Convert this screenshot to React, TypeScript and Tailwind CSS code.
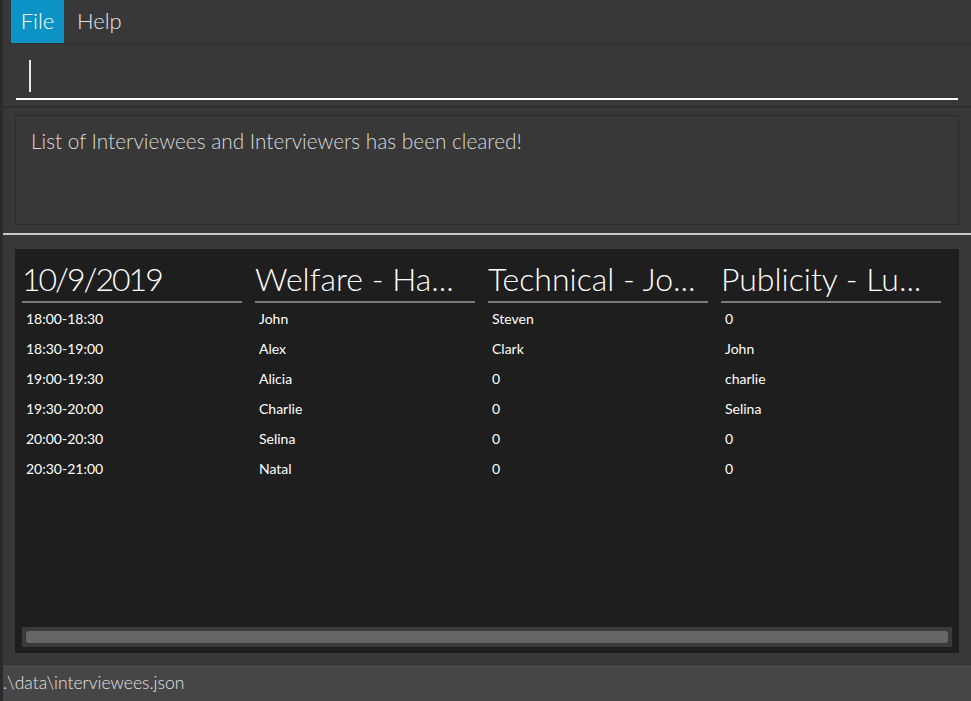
const rows = [
  ['18:00-18:30', 'John', 'Steven', '0'],
  ['18:30-19:00', 'Alex', 'Clark', 'John'],
  ['19:00-19:30', 'Alicia', '0', 'charlie'],
  ['19:30-20:00', 'Charlie', '0', 'Selina'],
  ['20:00-20:30', 'Selina', '0', '0'],
  ['20:30-21:00', 'Natal', '0', '0'],
];

const headers = ['10/9/2019', 'Welfare - Ha...', 'Technical - Jo...', 'Publicity - Lu...'];

export default function App() {
  return (
    <div
      className="w-[971px] h-[701px] bg-[#383838] flex flex-col overflow-hidden border-l-[3px] border-[#2b2b2b] text-white"
      style={{ fontFamily: 'Lato, "Open Sans", sans-serif' }}
    >
      {/* menu */}
      <div className="h-[44px] flex items-stretch border-b border-[#303030] pl-[8px]">
        <div className="bg-[#0b93c6] w-[53px] flex items-center justify-center text-[22px] font-light pb-[2px]">File</div>
        <div className="px-[13px] flex items-center text-[22px] font-light text-[#e4e4e4] pb-[2px]">Help</div>
      </div>

      {/* command box */}
      <div className="h-[64px] px-[13px] pt-[15px] border-b-2 border-[#2e2e2e]">
        <div className="h-[41px] border-b-2 border-white pl-[13px] pt-[1px]">
          <div className="w-[2px] h-[32px] bg-[#e8e8e8]"></div>
        </div>
      </div>

      {/* result box */}
      <div className="px-[12px] pt-[7px] pb-[8px]">
        <div className="h-[110px] border border-[#2c2c2c] px-[15px] pt-[9px] text-[20.8px] font-light text-[#d8d8d8]">
          List of Interviewees and Interviewers has been cleared!
        </div>
      </div>
      <div className="h-[2px] bg-[#cacaca]"></div>

      {/* schedule */}
      <div className="px-[12px] pt-[14px] pb-[11px] flex-1 flex flex-col">
        <div className="flex-1 bg-[#1e1e1e] flex flex-col px-[7px] pb-[6px]">
          <div className="flex-1 grid grid-cols-4 gap-x-[13px] pt-[10px] pr-[11px] content-start">
            {headers.map((h, k) => (
              <div
                key={h}
                className={
                  'border-b-2 border-[#7a7a7a] h-[44px] text-[32px] font-light leading-[40px] whitespace-nowrap overflow-hidden' +
                  (k === 0 ? ' tracking-[-2px]' : '')
                }
              >
                {h}
              </div>
            ))}
            {rows.map((r, i) =>
              r.map((c, j) => (
                <div key={i + '-' + j} className="h-[30px] flex items-center pl-[4px] text-[14px] text-white">
                  {c}
                </div>
              ))
            )}
          </div>
          <div className="h-[20px] bg-[#3a3a3a] px-[4px] py-[4px]">
            <div className="h-full bg-[#666666] rounded-[3px]"></div>
          </div>
        </div>
      </div>

      {/* status */}
      <div className="h-[37px] bg-[#464646] border-t border-[#333333] flex items-center text-[17.5px] font-light text-[#e2e2e2]">
        .\data\interviewees.json
      </div>
    </div>
  );
}
